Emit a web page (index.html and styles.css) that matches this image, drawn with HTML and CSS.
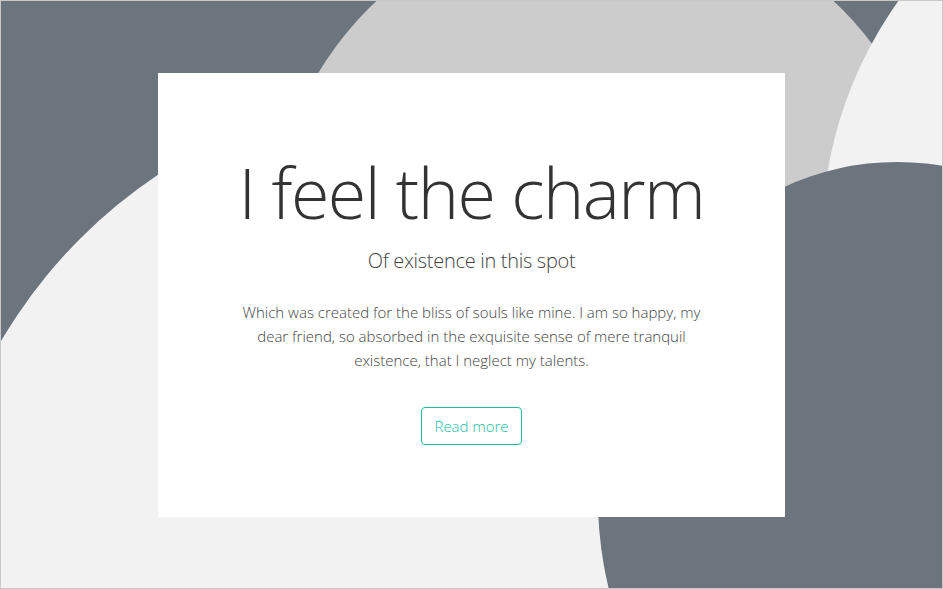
FILE: index.html
```html
<!DOCTYPE html>
<html lang="en">
<head>
<meta charset="utf-8">
<title>I feel the charm</title>
<link rel="stylesheet" href="styles.css">
</head>
<body>
<div class="stage">
  <div class="shape shape-mid"></div>
  <div class="shape shape-top-right"></div>
  <div class="shape shape-left"></div>
  <div class="shape shape-dark"></div>
  <main class="card">
    <h1 class="card-title">I feel the charm</h1>
    <p class="card-subtitle">Of existence in this spot</p>
    <p class="card-text">Which was created for the bliss of souls like mine. I am so happy, my dear friend, so absorbed in the exquisite sense of mere tranquil existence, that I neglect my talents.</p>
    <a class="btn-outline" href="#">Read more</a>
  </main>
</div>
</body>
</html>
```
FILE: styles.css
```css
html, body {
  margin: 0;
  padding: 0;
}
body {
  font-family: "Open Sans", "Noto Sans", sans-serif;
  color: #333;
}
.stage {
  position: relative;
  width: 943px;
  height: 589px;
  box-sizing: border-box;
  border: 1px solid #c9c9c9;
  background: #6c747e;
  overflow: hidden;
  display: flex;
  align-items: center;
  justify-content: center;
}
.shape {
  position: absolute;
  border-radius: 50%;
}
.shape-mid {
  left: 269px;
  top: -90px;
  width: 670px;
  height: 670px;
  background: #cccccc;
}
.shape-top-right {
  left: 821px;
  top: -171px;
  width: 818px;
  height: 818px;
  background: #f2f2f2;
}
.shape-left {
  left: -70px;
  top: 88px;
  width: 1020px;
  height: 1020px;
  background: #f2f2f2;
}
.shape-dark {
  left: 597px;
  top: 161px;
  width: 598px;
  height: 674px;
  background: #6c747e;
}
.card {
  position: relative;
  z-index: 1;
  width: 627px;
  height: 444px;
  box-sizing: border-box;
  background: #fff;
  display: flex;
  flex-direction: column;
  align-items: center;
  justify-content: center;
  text-align: center;
}
.card-title {
  margin: 4px 0 0;
  font-size: 70px;
  line-height: 86px;
  font-weight: 300;
  letter-spacing: -1.5px;
  color: #333;
}
.card-subtitle {
  margin: 11px 0 0;
  font-size: 20px;
  line-height: 30px;
  font-weight: 300;
  letter-spacing: -0.3px;
  color: #444;
}
.card-text {
  margin: 24px 0 0;
  width: 470px;
  font-size: 15px;
  line-height: 24px;
  font-weight: 300;
  color: #444;
}
.btn-outline {
  margin-top: 35px;
  padding: 8px 12px;
  font-size: 15px;
  line-height: 20px;
  font-weight: 300;
  color: #17bfa6;
  border: 1px solid #17bfa6;
  border-radius: 4px;
  text-decoration: none;
}
```
